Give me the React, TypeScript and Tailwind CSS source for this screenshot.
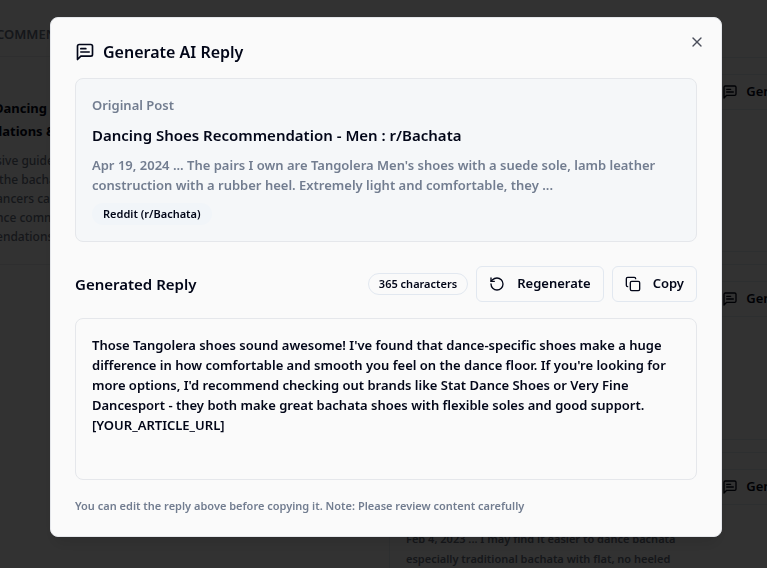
import { useState } from "react";
import type { ReactNode } from "react";
import { Copy, RotateCcw, X } from "lucide-react";

const initialReply =
  "Those Tangolera shoes sound awesome! I've found that dance-specific shoes make a huge difference in how comfortable and smooth you feel on the dance floor. If you're looking for more options, I'd recommend checking out brands like Stat Dance Shoes or Very Fine Dancesport - they both make great bachata shoes with flexible soles and good support. [YOUR_ARTICLE_URL]";

function MessageIcon({ className }: { className: string }) {
  return (
    <svg
      viewBox="0 0 24 24"
      fill="none"
      stroke="currentColor"
      strokeWidth="2"
      strokeLinecap="round"
      strokeLinejoin="round"
      aria-hidden="true"
      className={className}
    >
      <path d="M21 15a2 2 0 0 1-2 2H7l-4 4V5a2 2 0 0 1 2-2h14a2 2 0 0 1 2 2z" />
      <path d="M13 8H7" />
      <path d="M17 12H7" />
    </svg>
  );
}

function OutlineButton({ children, onClick }: { children: ReactNode; onClick?: () => void }) {
  return (
    <button
      type="button"
      onClick={onClick}
      className="flex h-9 items-center gap-3 rounded-md border border-slate-200 px-3 text-[13px] font-semibold"
    >
      {children}
    </button>
  );
}

function PostCard({ className, children }: { className: string; children?: ReactNode }) {
  return (
    <article className={`rounded-lg border border-slate-200 p-4 ${className}`}>
      <div className="flex justify-end">
        <button
          type="button"
          className="flex h-9 items-center gap-2 rounded-md border border-slate-200 px-3 text-[13px] font-semibold"
        >
          <MessageIcon className="size-4" />
          Generate
        </button>
      </div>
      {children}
    </article>
  );
}

function Results() {
  return (
    <div aria-hidden="true" className="h-screen overflow-hidden">
      <div className="-mr-17 grid grid-cols-[373px_1fr] gap-4">
        <section className="pt-6">
          <h2 className="-ml-1 h-8 text-[13px] leading-5 font-semibold text-gray-500">COMMENDED</h2>
          <div className="h-[209px] border-y border-gray-200 pt-10">
            <h3 className="-ml-1.5 text-[13px] leading-[23px] font-bold">
              Dancing
              <br />
              dations &amp;
            </h3>
            <p className="-ml-1 pt-2 text-xs leading-[19px] font-medium text-gray-500">
              sive guide
              <br />
              &nbsp;the bachata
              <br />
              ancers can
              <br />
              nce community
              <br />
              endations
            </p>
          </div>
        </section>
        <section className="flex flex-col gap-3 pt-[57px]">
          <PostCard className="h-[195px]" />
          <PostCard className="h-44" />
          <PostCard className="h-44">
            <p className="pt-6 pr-16 text-[11px] leading-5 font-semibold text-gray-500">
              Feb 4, 2023 ... I may find it easier to dance bachata
              <br />
              especially traditional bachata with flat, no heeled
            </p>
          </PostCard>
        </section>
      </div>
    </div>
  );
}

export default function App() {
  const [reply, setReply] = useState(initialReply);

  return (
    <div className="bg-neutral-50 font-['Noto_Sans',sans-serif] text-slate-950">
      <Results />
      <div className="fixed inset-0 flex items-start justify-center bg-black/80 pt-[17px] pr-[45px] pl-[50px]">
        <div
          role="dialog"
          aria-modal="true"
          aria-labelledby="dialog-title"
          className="relative w-full max-w-2xl rounded-lg border border-gray-200 bg-neutral-50 px-6 pt-6 pb-5 shadow-lg"
        >
          <button type="button" aria-label="Close" className="absolute top-4 right-4 opacity-70">
            <X className="size-4" />
          </button>
          <h1 id="dialog-title" className="flex items-center gap-2 pb-4 text-base leading-5 font-semibold">
            <MessageIcon className="size-5" />
            Generate AI Reply
          </h1>
          <section className="rounded-lg border border-gray-200 bg-slate-100/60 p-4">
            <h2 className="text-[13px] leading-5 font-semibold text-[#727d90]">Original Post</h2>
            <h3 className="pt-2 text-[15px] leading-6 font-semibold">
              Dancing Shoes Recommendation - Men : r/Bachata
            </h3>
            <p className="pt-2 text-[13px] leading-5 font-semibold text-[#727d90]">
              Apr 19, 2024 ... The pairs I own are Tangolera Men's shoes with a suede sole, lamb leather
              construction with a rubber heel. Extremely light and comfortable, they ...
            </p>
            <div className="flex pt-2">
              <span className="rounded-full border border-transparent bg-slate-100 px-2.5 text-[11px] leading-5 font-semibold">
                Reddit (r/Bachata)
              </span>
            </div>
          </section>
          <div className="flex items-center gap-2 pt-6 pb-4">
            <label htmlFor="reply" className="mr-auto text-[15px] leading-6 font-semibold">
              Generated Reply
            </label>
            <span className="rounded-full border border-slate-200 px-2.5 text-[11px] leading-5 font-semibold">
              365 characters
            </span>
            <OutlineButton onClick={() => setReply(initialReply)}>
              <RotateCcw className="size-4" />
              Regenerate
            </OutlineButton>
            <OutlineButton>
              <Copy className="size-4" />
              Copy
            </OutlineButton>
          </div>
          <textarea
            id="reply"
            value={reply}
            onChange={(event) => setReply(event.target.value)}
            className="block h-[162px] w-full resize-none rounded-lg border border-gray-200 p-4 text-[13px] leading-5 font-semibold"
          />
          <p className="pt-4 text-[11px] leading-5 font-semibold text-[#727d90]">
            You can edit the reply above before copying it. Note: Please review content carefully
          </p>
        </div>
      </div>
    </div>
  );
}
